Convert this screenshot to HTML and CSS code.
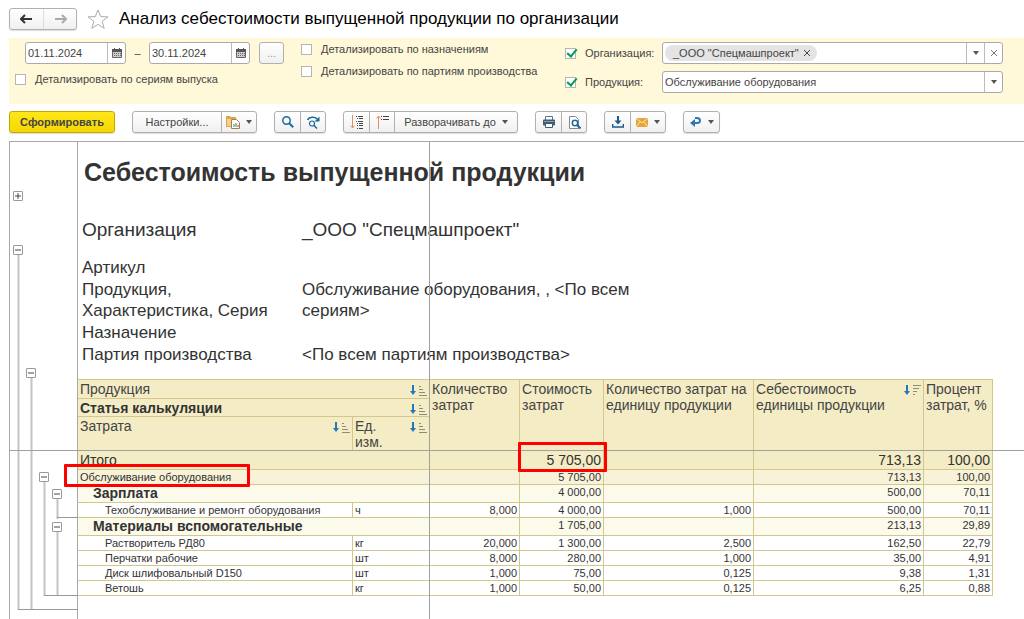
FILE: index.html
```html
<!DOCTYPE html>
<html lang="ru">
<head>
    <meta charset="UTF-8">
    <meta name="viewport" content="width=device-width, initial-scale=1.0">
    <title>Анализ себестоимости выпущенной продукции по организации</title>
    <link rel="stylesheet" href="styles.css">
</head>
<body>
    <svg class="sprite" aria-hidden="true">
        <symbol id="caret" viewBox="0 0 6 4"><path d="M0 0h6L3 4z" fill="#555"/></symbol>
        <symbol id="calendar" viewBox="0 0 10 10">
            <path d="M.5 1.500h9v8h-9z" fill="#ccc" stroke="#666"/>
            <path d="M0 2.500h10" stroke="#555" stroke-width="3"/>
            <path d="M2.500 0v2M7.500 0v2" stroke="#555"/>
            <path d="M2 5.500h7M2 7.500h7" stroke="#666" stroke-dasharray="1 1"/>
        </symbol>
        <symbol id="sort-asc" viewBox="0 0 17 11">
            <path d="M3 0v7" stroke="#2478b5" stroke-width="2"/>
            <path d="M0 6h6L3 10z" fill="#2478b5"/>
            <path d="M9 1.500h2M9 4.500h4M9 7.500h6M9 10.500h8" stroke="#8f8b78"/>
        </symbol>
        <symbol id="sort-desc" viewBox="0 0 17 11">
            <path d="M3 0v7" stroke="#2478b5" stroke-width="2"/>
            <path d="M0 6h6L3 10z" fill="#2478b5"/>
            <path d="M9 .5h8M9 3.500h6M9 6.500h4M9 9.500h2" stroke="#8f8b78"/>
        </symbol>
    </svg>

    <header class="title-bar">
        <div class="btn-group nav-group">
            <button type="button" aria-label="Назад">
                <svg width="13" height="10" viewBox="0 0 13 10"><path d="M12 5H2M5 1L1 5l4 4" fill="none" stroke="#333" stroke-width="2"/></svg>
            </button>
            <button type="button" aria-label="Вперед">
                <svg width="13" height="10" viewBox="0 0 13 10"><path d="M1 5h10M8 1l4 4-4 4" fill="none" stroke="#aaa" stroke-width="2"/></svg>
            </button>
        </div>
        <button type="button" class="star" aria-label="В избранное">
            <svg width="22" height="20" viewBox="0 0 22 20"><path d="M11 1l2.700 6.600 7.300.3-5.800 4.500 2 6.900L11 15.400l-6.200 3.900 2-6.900L1 7.900l7.300-.3z" fill="#fff" stroke="#aaa"/></svg>
        </button>
        <h1>Анализ себестоимости выпущенной продукции по организации</h1>
    </header>

    <form class="filters">
        <div class="period">
            <div class="dates">
                <div class="field date">
                    <input type="text" value="01.11.2024" aria-label="Начало периода">
                    <button type="button" aria-label="Календарь"><svg width="10" height="10"><use href="#calendar"/></svg></button>
                </div>
                <span class="dash">–</span>
                <div class="field date">
                    <input type="text" value="30.11.2024" aria-label="Конец периода">
                    <button type="button" aria-label="Календарь"><svg width="10" height="10"><use href="#calendar"/></svg></button>
                </div>
                <button type="button" class="more" aria-label="Выбрать период">...</button>
            </div>
            <label class="check"><input type="checkbox">Детализировать по сериям выпуска</label>
        </div>
        <div class="details">
            <label class="check"><input type="checkbox">Детализировать по назначениям</label>
            <label class="check"><input type="checkbox">Детализировать по партиям производства</label>
        </div>
        <div class="selection">
            <label class="check"><input type="checkbox" checked>Организация:</label>
            <div class="field">
                <span class="value"><span class="chip">_ООО "Спецмашпроект"<button type="button" aria-label="Убрать"><svg width="8" height="8" viewBox="0 0 8 8"><path d="M1 1l6 6M7 1L1 7" stroke="#444"/></svg></button></span></span>
                <button type="button" aria-label="Выбрать"><svg width="6" height="4"><use href="#caret"/></svg></button>
                <button type="button" aria-label="Очистить"><svg width="6" height="6" viewBox="0 0 6 6"><path d="M0 0l6 6M6 0L0 6" stroke="#777"/></svg></button>
            </div>
            <label class="check"><input type="checkbox" checked>Продукция:</label>
            <div class="field">
                <input type="text" value="Обслуживание оборудования" aria-label="Продукция">
                <button type="button" aria-label="Выбрать"><svg width="6" height="4"><use href="#caret"/></svg></button>
            </div>
        </div>
    </form>

    <div class="toolbar">
        <button type="button" class="primary">Сформировать</button>
        <div class="btn-group">
            <button type="button" class="settings">Настройки...</button>
            <button type="button" class="with-caret" aria-label="Варианты отчета">
                <svg width="14" height="14" viewBox="0 0 14 14">
                    <path d="M0 1h4l1 1h5v10H0z" fill="#dfa648"/>
                    <path d="M1 4h8v7H1z" fill="#f3cf8b"/>
                    <path d="M5.500 4.500h5l3 3v6h-8z" fill="#fff" stroke="#a08060"/>
                    <path d="M8 12V9M10 12V8" stroke="#3a8a4a"/><path d="M12 12v-2" stroke="#d34"/>
                </svg>
                <svg width="6" height="4"><use href="#caret"/></svg>
            </button>
        </div>
        <div class="btn-group">
            <button type="button" class="icon" aria-label="Найти">
                <svg width="12" height="12" viewBox="0 0 12 12"><circle cx="4.500" cy="4.500" r="3.700" fill="none" stroke="#1e6a9e" stroke-width="1.500"/><path d="M7 7l4.200 4.200" stroke="#1e6a9e" stroke-width="2"/></svg>
            </button>
            <button type="button" class="icon" aria-label="Найти далее">
                <svg width="13" height="13" viewBox="0 0 13 13"><circle cx="5" cy="7.500" r="2.500" fill="none" stroke="#1e6a9e" stroke-width="1.200"/><path d="M7 9.500l3 3M.5 4C2 .5 8 .5 10 3" fill="none" stroke="#1e6a9e" stroke-width="1.600"/><path d="M12.500.5v5h-5z" fill="#1e6a9e"/></svg>
            </button>
        </div>
        <div class="btn-group">
            <button type="button" class="icon" aria-label="Свернуть группы">
                <svg width="13" height="14" viewBox="0 0 13 14"><path d="M2.500 0v13M.5 10.500l2 2.500 2-2.500" fill="none" stroke="#ee8a60"/><path d="M6 1.500h1M8 1.500h5M7 3.500h1M9 3.500h4M6 6.500h1M8 6.500h5M7 8.500h1M9 8.500h4M7 10.500h1M9 10.500h4M7 13.500h1M9 13.500h4" stroke="#444"/></svg>
            </button>
            <button type="button" class="icon" aria-label="Развернуть группы">
                <svg width="13" height="14" viewBox="0 0 13 14"><path d="M2.500 14V1M.5 3.500l2-2.500 2 2.500" fill="none" stroke="#ee8a60"/><path d="M5 1.500h1M7 1.500h6M5 4.500h1M7 4.500h6" stroke="#444"/></svg>
            </button>
            <button type="button" class="expand">Разворачивать до <svg width="6" height="4"><use href="#caret"/></svg></button>
        </div>
        <div class="btn-group">
            <button type="button" class="icon" aria-label="Печать">
                <svg width="12" height="12" viewBox="0 0 12 12"><path d="M2.500 4V.5h7V4" fill="#fff" stroke="#5d7386"/><rect y="3.500" width="12" height="6" rx="1" fill="#3f5c76"/><path d="M1 5.500h10" stroke="#8ba0b2"/><path d="M2.500 7.500h7v4h-7z" fill="#fff" stroke="#3f5c76"/></svg>
            </button>
            <button type="button" class="icon" aria-label="Предварительный просмотр">
                <svg width="13" height="13" viewBox="0 0 13 13"><path d="M1.500.5h6l3 3v9h-9z" fill="#fff" stroke="#888"/><circle cx="7" cy="7" r="2.700" fill="#fff" stroke="#1e6a9e" stroke-width="1.500"/><path d="M9 9l3.500 3.500" stroke="#1e6a9e" stroke-width="2"/></svg>
            </button>
        </div>
        <div class="btn-group">
            <button type="button" class="icon" aria-label="Сохранить">
                <svg width="12" height="12" viewBox="0 0 12 12"><path d="M6 0v6" stroke="#1e5a8a" stroke-width="2"/><path d="M2.500 4.500h7L6 8.500z" fill="#1e5a8a"/><path d="M.7 8v3h10.600V8" fill="none" stroke="#1e5a8a" stroke-width="1.400"/></svg>
            </button>
            <button type="button" class="with-caret" aria-label="Отправить">
                <svg width="12" height="9" viewBox="0 0 12 9"><path d="M0 0h12v9H0z" fill="#e6a63c"/><path d="M0 0l6 5 6-5M0 9l4-5M12 9L8 4" fill="none" stroke="#fbe6b8"/></svg>
                <svg width="6" height="4"><use href="#caret"/></svg>
            </button>
        </div>
        <div class="btn-group">
            <button type="button" class="with-caret" aria-label="Перейти">
                <svg width="12" height="10" viewBox="0 0 12 10"><path d="M4 6h3c4 0 4-5 0-5H5" fill="none" stroke="#2e77ae" stroke-width="2"/><path d="M0 6l5-4v8z" fill="#2e77ae"/></svg>
                <svg width="6" height="4"><use href="#caret"/></svg>
            </button>
        </div>
    </div>

    <main class="report">
        <div class="tree">
            <svg class="tree-lines" width="68" height="478" viewBox="0 0 68 478">
                <path d="M8.500 108v360M21.500 232v236M34.500 340v114M47.500 356v21M47.500 390v64" fill="none" stroke="#c4c4c4" stroke-width="2"/>
                <path d="M8 467.500h60M34 453.500h34M47 375.500h21" stroke="#999"/>
            </svg>
            <button type="button" class="node node-title" aria-label="Развернуть"><svg width="8" height="8" viewBox="0 0 8 8"><path d="M1 4h6M4 1v6" stroke="#444"/></svg></button>
            <button type="button" class="node node-params" aria-label="Свернуть"><svg width="8" height="8" viewBox="0 0 8 8"><path d="M1 4h6" stroke="#444"/></svg></button>
            <button type="button" class="node node-table" aria-label="Свернуть"><svg width="8" height="8" viewBox="0 0 8 8"><path d="M1 4h6" stroke="#444"/></svg></button>
            <button type="button" class="node node-product" aria-label="Свернуть"><svg width="8" height="8" viewBox="0 0 8 8"><path d="M1 4h6" stroke="#444"/></svg></button>
            <button type="button" class="node node-salary" aria-label="Свернуть"><svg width="8" height="8" viewBox="0 0 8 8"><path d="M1 4h6" stroke="#444"/></svg></button>
            <button type="button" class="node node-materials" aria-label="Свернуть"><svg width="8" height="8" viewBox="0 0 8 8"><path d="M1 4h6" stroke="#444"/></svg></button>
        </div>
        <section class="sheet">
            <h2>Себестоимость выпущенной продукции</h2>
            <dl class="params">
                <dt class="org">Организация</dt><dd class="org">_ООО "Спецмашпроект"</dd>
                <dt>Артикул</dt><dd></dd>
                <dt>Продукция, Характеристика, Серия</dt><dd>Обслуживание оборудования, , &lt;По всем сериям&gt;</dd>
                <dt>Назначение</dt><dd></dd>
                <dt>Партия производства</dt><dd>&lt;По всем партиям производства&gt;</dd>
            </dl>
            <table>
                <colgroup>
                    <col class="c-name"><col class="c-unit"><col class="c-qty"><col class="c-cost"><col class="c-rate"><col class="c-price"><col class="c-share">
                </colgroup>
                <thead>
                    <tr class="h-product">
                        <th colspan="2"><div>Продукция<svg width="17" height="11"><use href="#sort-asc"/></svg></div></th>
                        <th rowspan="3">Количество затрат</th>
                        <th rowspan="3">Стоимость затрат</th>
                        <th rowspan="3">Количество затрат на единицу продукции</th>
                        <th rowspan="3"><div>Себестоимость единицы продукции<svg width="17" height="11"><use href="#sort-desc"/></svg></div></th>
                        <th rowspan="3">Процент затрат, %</th>
                    </tr>
                    <tr class="h-article">
                        <th colspan="2"><div>Статья калькуляции<svg width="17" height="11"><use href="#sort-asc"/></svg></div></th>
                    </tr>
                    <tr class="h-cost">
                        <th><div>Затрата<svg width="17" height="11"><use href="#sort-asc"/></svg></div></th>
                        <th><div><span>Ед.<br>изм.</span><svg width="17" height="11"><use href="#sort-asc"/></svg></div></th>
                    </tr>
                </thead>
                <tbody>
                    <tr class="total"><td colspan="2">Итого</td><td></td><td class="marked-cell">5 705,00</td><td></td><td>713,13</td><td>100,00</td></tr>
                    <tr class="product"><td colspan="2" class="marked-name">Обслуживание оборудования</td><td></td><td>5 705,00</td><td></td><td>713,13</td><td>100,00</td></tr>
                    <tr class="article"><td colspan="2">Зарплата</td><td></td><td>4 000,00</td><td></td><td>500,00</td><td>70,11</td></tr>
                    <tr><td>Техобслуживание и ремонт оборудования</td><td>ч</td><td>8,000</td><td>4 000,00</td><td>1,000</td><td>500,00</td><td>70,11</td></tr>
                    <tr class="article"><td colspan="2">Материалы вспомогательные</td><td></td><td>1 705,00</td><td></td><td>213,13</td><td>29,89</td></tr>
                    <tr><td>Растворитель РД80</td><td>кг</td><td>20,000</td><td>1 300,00</td><td>2,500</td><td>162,50</td><td>22,79</td></tr>
                    <tr><td>Перчатки рабочие</td><td>шт</td><td>8,000</td><td>280,00</td><td>1,000</td><td>35,00</td><td>4,91</td></tr>
                    <tr><td>Диск шлифовальный D150</td><td>шт</td><td>1,000</td><td>75,00</td><td>0,125</td><td>9,38</td><td>1,31</td></tr>
                    <tr><td>Ветошь</td><td>кг</td><td>1,000</td><td>50,00</td><td>0,125</td><td>6,25</td><td>0,88</td></tr>
                </tbody>
            </table>
        </section>
        <div class="freeze-row"></div>
        <div class="freeze-col"></div>
    </main>
</body>
</html>
```

FILE: styles.css
```css
*,
*::after {
    box-sizing: border-box;
}

body {
    margin: 0;
    min-height: 100vh;
    display: flex;
    flex-direction: column;
    font-family: "Liberation Sans", Arial, sans-serif;
    font-size: 11px;
    color: #444;
    background-color: #fff;
}

button,
input {
    font: inherit;
    color: inherit;
}

button {
    padding: 0;
    border: none;
    background: none;
    cursor: pointer;
}

svg {
    display: block;
    flex: none;
}

.sprite {
    position: absolute;
    width: 0;
    height: 0;
}

/* Title bar */
.title-bar {
    display: flex;
    align-items: center;
    height: 38px;
    padding-left: 9px;
}

.title-bar h1 {
    margin: 0 0 0 10px;
    font-size: 17px;
    font-weight: normal;
    color: #000;
}

.star {
    margin-left: 10px;
}

.btn-group {
    display: flex;
    height: 22px;
    border: 1px solid #b0b0b0;
    border-radius: 3px;
    background: linear-gradient(#fff, #f0f0f0);
    box-shadow: 0 1px 1px #ddd;
}

.btn-group button {
    display: flex;
    align-items: center;
    justify-content: center;
}

.btn-group button + button {
    border-left: 1px solid #b0b0b0;
}

.nav-group button {
    width: 33px;
}

.nav-group button + button {
    border-left-color: #ddd;
}

/* Filters */
.filters {
    display: flex;
    height: 66px;
    margin-left: 9px;
    padding: 4px 21px 0 6px;
    background-color: #fff9d9;
}

.period {
    width: 286px;
}

.dates {
    display: flex;
    align-items: center;
    padding-left: 10px;
    margin-bottom: 8px;
}

.dash {
    width: 23px;
    text-align: center;
}

.field {
    display: flex;
    height: 22px;
    border: 1px solid #aaa;
    border-radius: 3px;
    background-color: #fff;
}

.field input,
.field .value {
    flex: 1;
    min-width: 0;
    padding: 0 2px;
    border: none;
    background: none;
    outline: none;
}

.field > button {
    display: flex;
    align-items: center;
    justify-content: center;
    width: 18px;
    border-left: 1px solid #bbb;
}

.date {
    width: 101px;
}

.more {
    width: 25px;
    height: 22px;
    margin-left: 9px;
    border: 1px solid #b0b0b0;
    border-radius: 3px;
    background: linear-gradient(#fff, #f0f0f0);
    color: #999;
}

.check {
    display: flex;
    align-items: center;
    line-height: 14px;
    white-space: nowrap;
}

.check input {
    appearance: none;
    width: 11px;
    height: 11px;
    margin: 0 9px 0 0;
    border: 1px solid #b5b5b5;
    background-color: #fff;
    position: relative;
}

.check input:checked::after {
    content: "";
    position: absolute;
    left: 3px;
    top: -2px;
    width: 6px;
    height: 10px;
    border: solid #0a9a50;
    border-width: 0 2px 2px 0;
    transform: rotate(40deg);
}

.details {
    display: flex;
    flex-direction: column;
    gap: 8px;
    width: 264px;
}

.selection {
    flex: 1;
    display: grid;
    grid-template-columns: 97px 1fr;
    gap: 7px 0;
    align-content: start;
}

.chip {
    display: inline-flex;
    align-items: center;
    gap: 4px;
    height: 16px;
    margin-top: 2px;
    padding: 0 6px 0 8px;
    border-radius: 8px;
    background-color: #e4e4e4;
}

/* Toolbar */
.toolbar {
    display: flex;
    gap: 17px;
    padding: 7px 9px 8px;
}

.primary {
    width: 106px;
    height: 22px;
    border: 1px solid #c4a800;
    border-radius: 3px;
    background: linear-gradient(#ffe619, #f5d800);
    box-shadow: 0 1px 1px #ddd;
    font-weight: bold;
}

.toolbar .settings {
    width: 88px;
}

.toolbar .with-caret {
    gap: 6px;
    width: 35px;
}

.toolbar .icon {
    width: 25px;
}

.toolbar .expand {
    gap: 6px;
    width: 123px;
}

/* Report */
.report {
    position: relative;
    flex: 1;
    display: flex;
    margin-left: 9px;
    border: solid #a8a8a8;
    border-width: 1px 0 0 1px;
}

.tree {
    position: relative;
    width: 68px;
    border-right: 1px solid #a8a8a8;
}

.tree-lines {
    position: absolute;
    left: 0;
    top: 0;
}

.node {
    position: absolute;
    width: 10px;
    height: 10px;
    border: 1px solid #999;
    border-radius: 1px;
    background-color: #fff;
}

.node-title { left: 3px; top: 49px; }
.node-params { left: 3px; top: 103px; }
.node-table { left: 16px; top: 226px; }
.node-product { left: 29px; top: 330px; }
.node-salary { left: 42px; top: 347px; }
.node-materials { left: 42px; top: 380px; }

.freeze-row,
.freeze-col {
    position: absolute;
    background-color: #a0a0a0;
    pointer-events: none;
}

.freeze-row {
    left: 0;
    right: 0;
    top: 308px;
    height: 1px;
}

.freeze-col {
    left: 419px;
    top: 0;
    bottom: 0;
    width: 1px;
}

.sheet {
    flex: 1;
    color: #333;
}

.sheet h2 {
    margin: 0;
    padding: 15px 6px 32px;
    font-size: 25px;
    line-height: 30px;
}

.params {
    display: grid;
    grid-template-columns: 220px 340px;
    margin: 0;
    padding-left: 4px;
    font-size: 17px;
    line-height: 21px;
}

.params dt,
.params dd {
    margin: 0;
    padding: 0 30px 1px 0;
}

.params .org {
    padding-bottom: 16px;
    font-size: 19px;
    line-height: 22px;
}

.params dd {
    padding-right: 0;
}

table {
    table-layout: fixed;
    width: 915px;
    margin: 13px 0 0 -1px;
    border-collapse: collapse;
    line-height: 12px;
}

.c-name { width: 275px; }
.c-unit { width: 77px; }
.c-qty { width: 90px; }
.c-cost { width: 84px; }
.c-rate { width: 150px; }
.c-price { width: 170px; }
.c-share { width: 69px; }

th,
td {
    padding: 1px 2px;
    border: 1px solid #d2c78c;
    vertical-align: top;
    text-align: right;
    white-space: nowrap;
}

th {
    padding-bottom: 0;
    background-color: #f4ecc5;
    font-size: 14px;
    font-weight: normal;
    line-height: 16px;
    text-align: left;
    white-space: normal;
    color: #444;
}

th div {
    display: flex;
    justify-content: space-between;
}

th svg {
    margin-top: 4px;
}

.h-product {
    height: 19px;
}

.h-article th {
    font-weight: bold;
    color: #333;
}

tbody tr {
    height: 15px;
}

tbody td:first-child {
    padding-left: 27px;
    text-align: left;
}

td:nth-last-child(6) {
    text-align: left;
}

.total td {
    background-color: #f4ecc5;
    font-size: 14px;
    line-height: 16px;
}

.total td:first-child,
.product td:first-child {
    padding-left: 2px;
}

.product td {
    background-color: #f8f2d8;
}

.article td {
    background-color: #fcfaeb;
}

.article td:first-child {
    padding-left: 15px;
    font-size: 14px;
    font-weight: bold;
    line-height: 15px;
}

/* Red frames around the values to look at */
.marked-cell,
.marked-name {
    position: relative;
}

.marked-cell::after,
.marked-name::after {
    content: "";
    position: absolute;
    z-index: 1;
    border: 3px solid #f00;
    border-radius: 1px;
}

.marked-cell::after {
    inset: -9px -4px -3px -2px;
}

.marked-name::after {
    left: -14px;
    top: -6px;
    width: 186px;
    height: 23px;
}
```
